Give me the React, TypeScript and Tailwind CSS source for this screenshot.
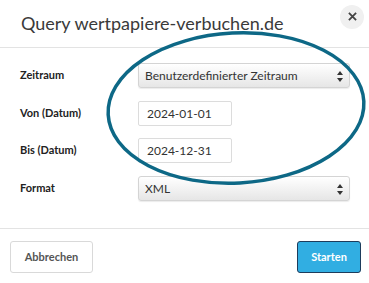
import React from 'react'

const font = { fontFamily: 'Lato, "Open Sans", Arial, sans-serif' }

function SelectBox({ value }: { value: string }) {
  return (
    <div className="relative flex h-[25px] w-[212px] items-center rounded-[3px] border border-[#d4d4d4] bg-gradient-to-b from-white to-[#e6e6e6] pl-[6px] text-[12px] text-[#333] shadow-[0_1px_1px_rgba(0,0,0,0.08)]">
      {value}
      <svg className="absolute right-[6px] top-[7px]" width="6" height="11" viewBox="0 0 6 11">
        <path d="M3 0 L6 4 L0 4 Z" fill="#333" />
        <path d="M3 11 L6 7 L0 7 Z" fill="#333" />
      </svg>
    </div>
  )
}

function DateInput({ value }: { value: string }) {
  return (
    <div className="flex h-[25px] w-[94px] items-center rounded-[2px] border border-[#dcdcdc] bg-white pl-[8px] text-[12px] text-[#333]">
      {value}
    </div>
  )
}

function Row({ label, children, className = '' }: { label: string; children: React.ReactNode; className?: string }) {
  return (
    <div className={`flex items-center ${className}`}>
      <div className="w-[138px] shrink-0 pl-[20px] text-[11px] font-bold text-[#222]">{label}</div>
      {children}
    </div>
  )
}

export default function App() {
  return (
    <div className="relative h-[283px] w-[369px] overflow-hidden bg-white" style={font}>
      {/* Header */}
      <div className="flex h-[48px] items-center justify-between border-b border-[#e3e3e3] pl-[21px] pr-[5px]">
        <h1 className="text-[18px] font-normal text-[#3a3a3a]">Query wertpapiere-verbuchen.de</h1>
        <button className="mb-[14px] flex h-[24px] w-[24px] items-center justify-center rounded-full bg-[#f0f0f0]">
          <svg width="9" height="9" viewBox="0 0 10 10">
            <path d="M1 1 L9 9 M9 1 L1 9" stroke="#444" strokeWidth="2" />
          </svg>
        </button>
      </div>

      {/* Form */}
      <div className="flex h-[181px] flex-col border-b border-[#e3e3e3] pt-[15px]">
        <Row label="Zeitraum">
          <SelectBox value="Benutzerdefinierter Zeitraum" />
        </Row>
        <Row label="Von (Datum)" className="mt-[13px]">
          <DateInput value="2024-01-01" />
        </Row>
        <Row label="Bis (Datum)" className="mt-[12px]">
          <DateInput value="2024-12-31" />
        </Row>
        <Row label="Format" className="mt-[13px]">
          <SelectBox value="XML" />
        </Row>
      </div>

      {/* Footer */}
      <div className="flex items-center justify-between pl-[10px] pr-[8px] pt-[12px]">
        <button className="h-[32px] w-[83px] rounded-[3px] border border-[#d9d9d9] bg-white text-[11px] font-bold text-[#555]">
          Abbrechen
        </button>
        <button className="h-[32px] w-[64px] rounded-[3px] border border-[#1d3c5c] bg-[#31aee2] text-[11px] font-bold text-white">
          Starten
        </button>
      </div>

      {/* Annotation ellipse */}
      <svg className="pointer-events-none absolute left-0 top-0" width="369" height="283">
        <ellipse cx="236" cy="108" rx="128" ry="75" fill="none" stroke="#0d6886" strokeWidth="3.5" transform="rotate(-3 236 108)" />
      </svg>
    </div>
  )
}
